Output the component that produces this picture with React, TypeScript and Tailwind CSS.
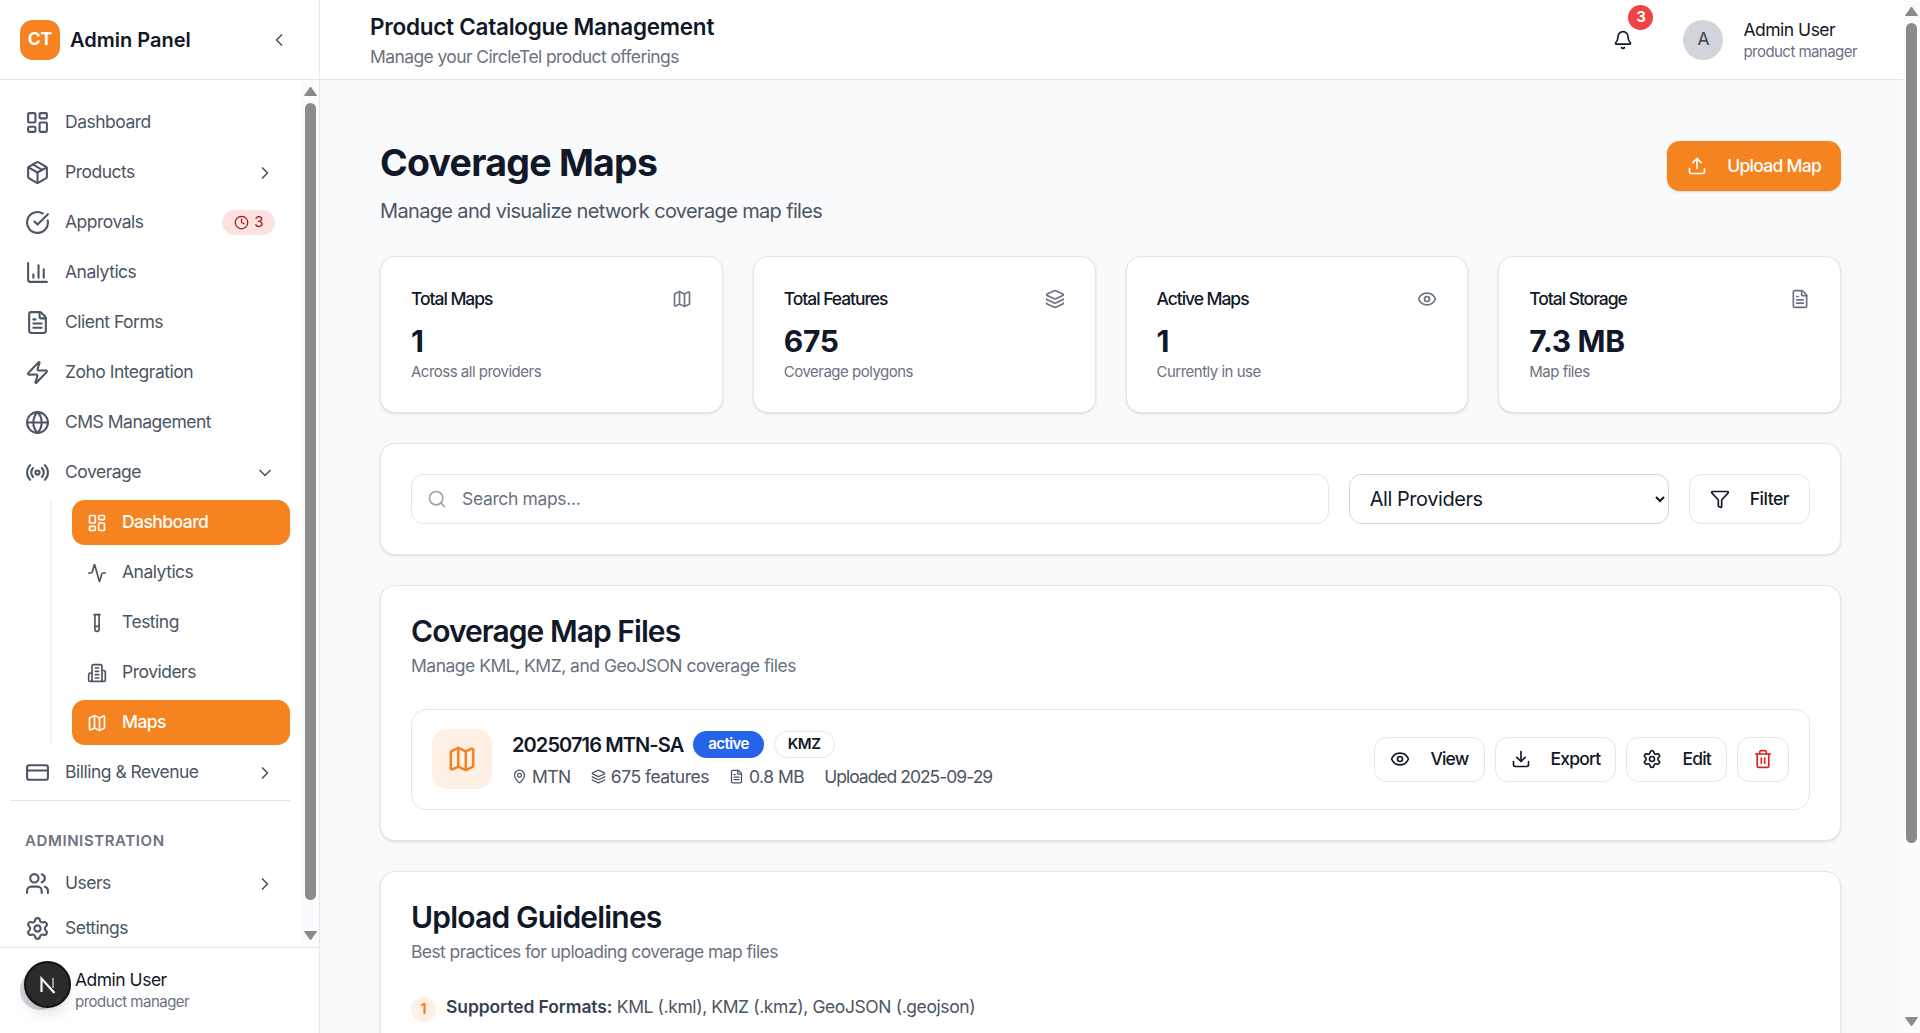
import {
  Activity,
  Bell,
  ChartColumn,
  ChevronDown,
  ChevronLeft,
  ChevronRight,
  CircleCheckBig,
  Clock,
  CreditCard,
  Download,
  Eye,
  FileText,
  Filter,
  Globe,
  Layers,
  LayoutDashboard,
  Map as MapIcon,
  MapPin,
  Package,
  Radio,
  Search,
  Settings,
  TestTube,
  Trash2,
  Upload,
  Users,
  Zap,
} from "lucide-react";
import type { ComponentType, ReactNode } from "react";

type Icon = ComponentType<{ className?: string; strokeWidth?: number }>;

function ProvidersIcon({ className }: { className?: string }) {
  return (
    <svg
      viewBox="0 0 24 24"
      fill="none"
      stroke="currentColor"
      strokeWidth="2"
      strokeLinecap="round"
      strokeLinejoin="round"
      className={className}
    >
      <path d="M6 22V4a2 2 0 0 1 2-2h8a2 2 0 0 1 2 2v18Z" />
      <path d="M6 12H4a2 2 0 0 0-2 2v6a2 2 0 0 0 2 2h2" />
      <path d="M18 9h2a2 2 0 0 1 2 2v9a2 2 0 0 1-2 2h-2" />
      <path d="M10 6h4" />
      <path d="M10 10h4" />
      <path d="M10 14h4" />
      <path d="M10 18h4" />
    </svg>
  );
}

function NavItem({
  icon: IconCmp,
  label,
  chevron,
  children,
}: {
  icon: Icon;
  label: string;
  chevron?: "right" | "down";
  children?: ReactNode;
}) {
  return (
    <div className="flex h-[45px] mb-[5px] items-center pl-[15px] pr-[15px] text-[17.5px] tracking-[-0.5px] text-[#4b5563]">
      <IconCmp className="w-[25px] h-[25px] shrink-0 text-[#4b5563]" strokeWidth={2} />
      <span className="ml-[15px] flex-1 whitespace-nowrap">{label}</span>
      {chevron === "right" && <ChevronRight className="w-[20px] h-[20px] text-[#4b5563]" />}
      {chevron === "down" && <ChevronDown className="w-[20px] h-[20px] text-[#4b5563]" />}
      {children}
    </div>
  );
}

function SubItem({ icon: IconCmp, label, active }: { icon: Icon; label: string; active?: boolean }) {
  return (
    <div
      className={
        active
          ? "flex h-[45px] items-center rounded-[12.5px] bg-[#f58320] pl-[15px] text-[17.5px] font-medium tracking-[-0.55px] text-white"
          : "flex h-[45px] items-center rounded-[12.5px] pl-[15px] text-[17.5px] tracking-[-0.5px] text-[#4b5563]"
      }
    >
      <IconCmp className="w-[20px] h-[20px] shrink-0" />
      <span className="ml-[15px]">{label}</span>
    </div>
  );
}

function ScrollBar({ thumbTop, thumbHeight }: { thumbTop: string; thumbHeight: string }) {
  return (
    <div className="flex w-[17px] shrink-0 flex-col items-center bg-[#fbfcfd] py-[6px]">
      <svg width="13" height="10" viewBox="0 0 13 10" className="shrink-0">
        <path d="M6.5 1 L12.5 9.5 H0.5 Z" fill="#8b8b8b" stroke="#8b8b8b" strokeLinejoin="round" />
      </svg>
      <div className={`w-[11px] rounded-full bg-[#8b8b8b] ${thumbTop} ${thumbHeight}`} />
      <div className="flex-1" />
      <svg width="13" height="10" viewBox="0 0 13 10" className="shrink-0">
        <path d="M0.5 0.5 H12.5 L6.5 9 Z" fill="#8b8b8b" stroke="#8b8b8b" strokeLinejoin="round" />
      </svg>
    </div>
  );
}

function Sidebar() {
  return (
    <aside className="flex h-[1033px] w-[320px] shrink-0 flex-col border-r border-[#e5e7eb] bg-white">
      <div className="flex h-[80px] shrink-0 items-center border-b border-[#e5e7eb] pl-[20px] pr-[30px]">
        <div className="flex h-[40px] w-[40px] items-center justify-center rounded-[12.5px] bg-[#f58320] text-[17.5px] font-bold text-white">
          CT
        </div>
        <span className="ml-[10px] flex-1 text-[20px] font-semibold text-[#111827]">Admin Panel</span>
        <ChevronLeft className="w-[20px] h-[20px] text-[#4b5563]" />
      </div>

      <div className="flex min-h-0 flex-1">
        <nav className="min-w-0 flex-1 overflow-hidden pl-[10px] pr-[12px] pt-[20px]">
          <NavItem icon={LayoutDashboard} label="Dashboard" />
          <NavItem icon={Package} label="Products" chevron="right" />
          <NavItem icon={CircleCheckBig} label="Approvals">
            <span className="flex h-[25px] items-center gap-[5px] rounded-full bg-[#fee2e2] px-[12px] text-[15px] text-[#991b1b]">
              <Clock className="w-[15px] h-[15px]" />3
            </span>
          </NavItem>
          <NavItem icon={ChartColumn} label="Analytics" />
          <NavItem icon={FileText} label="Client Forms" />
          <NavItem icon={Zap} label="Zoho Integration" />
          <NavItem icon={Globe} label="CMS Management" />
          <NavItem icon={Radio} label="Coverage" chevron="down" />
          <div className="ml-[40px] flex flex-col gap-[5px] border-l-2 border-[#f3f4f6] pl-[20px]">
            <SubItem icon={LayoutDashboard} label="Dashboard" active />
            <SubItem icon={Activity} label="Analytics" />
            <SubItem icon={TestTube} label="Testing" />
            <SubItem icon={ProvidersIcon} label="Providers" />
            <SubItem icon={MapIcon} label="Maps" active />
          </div>
          <div className="mt-[5px]">
            <NavItem icon={CreditCard} label="Billing & Revenue" chevron="right" />
          </div>
          <div className="mt-[1px] border-t border-[#e5e7eb] pb-[30px]" />
          <div className="h-[20px] pl-[15px] text-[15px] font-semibold uppercase leading-[20px] tracking-[0.6px] text-[#6b7280]">
            Administration
          </div>
          <div className="mt-[10px]">
            <div className="-mb-[5px]">
              <NavItem icon={Users} label="Users" chevron="right" />
            </div>
            <NavItem icon={Settings} label="Settings" />
          </div>
        </nav>
        <ScrollBar thumbTop="mt-[7px]" thumbHeight="h-[797px]" />
      </div>

      <div className="flex h-[86px] shrink-0 items-center border-t border-[#e5e7eb] pb-[2px] pl-[20px]">
        <div className="h-[40px] w-[40px] shrink-0 rounded-full bg-[#d1d5db]" />
        <div className="ml-[15px]">
          <div className="text-[17.5px] leading-[25px] tracking-[-0.5px] text-[#111827]">Admin User</div>
          <div className="text-[15px] leading-[20px] tracking-[-0.5px] text-[#6b7280]">product manager</div>
        </div>
      </div>
    </aside>
  );
}

function StatCard({ title, value, note, icon: IconCmp }: { title: string; value: string; note: string; icon: Icon }) {
  return (
    <div className="h-[157px] rounded-[15px] border border-[#e5e7eb] bg-white px-[30px] pt-[29px] shadow-sm">
      <div className="flex items-center justify-between">
        <span className="text-[17.5px] font-medium leading-[25px] tracking-[-1.05px] text-[#111827]">{title}</span>
        <IconCmp className="mt-[1px] w-[20px] h-[20px] text-[#6b7280]" />
      </div>
      <div className="mt-[10px] text-[30px] font-bold leading-[40px] tracking-[-0.3px] text-[#111827]">{value}</div>
      <div className="mt-[1px] text-[15px] leading-[20px] tracking-[-0.5px] text-[#6b7280]">{note}</div>
    </div>
  );
}

function ActionButton({ icon: IconCmp, label }: { icon: Icon; label: string }) {
  return (
    <button
      type="button"
      className="flex h-[45px] items-center gap-[20px] rounded-[12.5px] border border-[#e5e7eb] bg-white px-[15px] text-[17.5px] font-medium tracking-[-0.8px] text-[#111827]"
    >
      <IconCmp className="w-[20px] h-[20px]" />
      {label}
    </button>
  );
}

function MetaItem({ icon: IconCmp, children }: { icon: Icon; children: ReactNode }) {
  return (
    <span className="flex items-center gap-[5px] tracking-[-0.5px]">
      <IconCmp className="w-[15px] h-[15px]" />
      {children}
    </span>
  );
}

function NextBadge() {
  return (
    <div className="absolute left-[24px] top-[961px] flex h-[47px] w-[47px] items-center justify-center rounded-full border-2 border-[#111111] bg-[#2b2b2b] shadow-lg">
      <svg width="20" height="20" viewBox="0 0 20 20" fill="none">
        <path d="M3.5 17V3.5L16.5 18" stroke="#f5f5f5" strokeWidth="2.2" />
        <path d="M15 3v10" stroke="#9a9a9a" strokeWidth="2" />
      </svg>
    </div>
  );
}

export default function App() {
  return (
    <div className="relative flex h-[1033px] w-full overflow-hidden bg-[#f9fafb] [font-family:Inter,sans-serif]">
      <Sidebar />

      <div className="flex min-w-0 flex-1 flex-col">
        <header className="flex h-[80px] shrink-0 items-center border-b border-[#e5e7eb] bg-white pl-[50px] pr-[46px]">
          <div className="flex-1 pt-[2px]">
            <h1 className="text-[22.5px] font-semibold leading-[30px] tracking-[-0.25px] text-[#111827]">
              Product Catalogue Management
            </h1>
            <p className="mt-[2px] text-[17.5px] leading-[25px] tracking-[-0.6px] text-[#6b7280]">
              Manage your CircleTel product offerings
            </p>
          </div>
          <div className="relative mr-[50px]">
            <Bell className="w-[20px] h-[20px] text-[#111827]" />
            <span className="absolute -right-[20px] -top-[25px] flex h-[25px] w-[25px] items-center justify-center rounded-full bg-[#ef4444] text-[15px] font-bold text-white">
              3
            </span>
          </div>
          <div className="flex h-[40px] w-[40px] items-center justify-center rounded-full bg-[#d1d5db] text-[17.5px] text-[#374151]">
            A
          </div>
          <div className="ml-[20px]">
            <div className="text-[17.5px] leading-[25px] tracking-[-0.5px] text-[#111827]">Admin User</div>
            <div className="text-[15px] leading-[20px] tracking-[-0.55px] text-[#6b7280]">product manager</div>
          </div>
        </header>

        <main className="min-h-0 flex-1 overflow-hidden pl-[60px] pr-[62px] pt-[60px]">
          <div className="flex items-start justify-between">
            <div>
              <h2 className="text-[37.5px] font-bold leading-[45px] tracking-[-0.75px] text-[#111827]">Coverage Maps</h2>
              <p className="mt-[11px] text-[20px] leading-[30px] tracking-[-0.65px] text-[#4b5563]">
                Manage and visualize network coverage map files
              </p>
            </div>
            <button
              type="button"
              className="mt-[1px] flex h-[50px] items-center gap-[20px] rounded-[12.5px] bg-[#f58320] px-[20px] text-[17.5px] font-medium tracking-[-0.73px] text-white shadow-sm"
            >
              <Upload className="w-[20px] h-[20px]" />
              Upload Map
            </button>
          </div>

          <div className="mt-[30px] grid grid-cols-4 gap-[30px]">
            <StatCard title="Total Maps" value="1" note="Across all providers" icon={MapIcon} />
            <StatCard title="Total Features" value="675" note="Coverage polygons" icon={Layers} />
            <StatCard title="Active Maps" value="1" note="Currently in use" icon={Eye} />
            <StatCard title="Total Storage" value="7.3 MB" note="Map files" icon={FileText} />
          </div>

          <div className="mt-[30px] flex h-[112px] items-center gap-[20px] rounded-[15px] border border-[#e5e7eb] bg-white px-[30px] shadow-sm">
            <div className="flex h-[50px] flex-1 items-center rounded-[12.5px] border border-[#e5e7eb] pl-[15px]">
              <Search className="w-[20px] h-[20px] shrink-0 text-[#9ca3af]" />
              <input
                placeholder="Search maps..."
                className="ml-[15px] flex-1 bg-transparent text-[17.5px] tracking-[-0.35px] outline-none placeholder:text-[#6b7280]"
              />
            </div>
            <select className="h-[50px] w-[320px] rounded-[12.5px] border border-[#d1d5db] bg-white pl-[16px] pr-[5px] text-[20px] tracking-[-0.46px] text-[#111827]">
              <option>All Providers</option>
            </select>
            <button
              type="button"
              className="flex h-[50px] items-center gap-[20px] rounded-[12.5px] border border-[#e5e7eb] bg-white px-[20px] text-[17.5px] font-medium tracking-[-0.5px] text-[#111827]"
            >
              <Filter className="w-[20px] h-[20px]" />
              Filter
            </button>
          </div>

          <section className="mt-[30px] rounded-[15px] border border-[#e5e7eb] bg-white p-[30px] shadow-sm">
            <h3 className="text-[30px] font-semibold leading-[30px] tracking-[-0.95px] text-[#111827]">
              Coverage Map Files
            </h3>
            <p className="mt-[6.5px] text-[17.5px] leading-[25px] tracking-[-0.5px] text-[#6b7280]">
              Manage KML, KMZ, and GeoJSON coverage files
            </p>
            <div className="mt-[31px] flex h-[101px] items-center rounded-[15px] border border-[#e5e7eb] px-[20px]">
              <div className="flex h-[60px] w-[60px] shrink-0 items-center justify-center rounded-[15px] bg-[#fef0e5]">
                <MapIcon className="w-[30px] h-[30px] text-[#f58320]" />
              </div>
              <div className="ml-[20px] flex-1">
                <div className="flex items-center">
                  <span className="text-[20px] font-semibold leading-[30px] tracking-[-0.9px] text-[#111827]">
                    20250716 MTN-SA
                  </span>
                  <span className="ml-[10px] flex h-[27px] items-center rounded-full bg-[#2563eb] px-[15px] text-[15px] font-semibold tracking-[-0.6px] text-white">
                    active
                  </span>
                  <span className="ml-[10px] flex h-[27px] items-center rounded-full border border-[#e5e7eb] px-[13px] text-[15px] font-semibold tracking-[-0.4px] text-[#111827]">
                    KMZ
                  </span>
                </div>
                <div className="mt-[4px] flex items-center gap-[20px] text-[17.5px] leading-[25px] text-[#4b5563]">
                  <MetaItem icon={MapPin}>MTN</MetaItem>
                  <MetaItem icon={Layers}>675 features</MetaItem>
                  <MetaItem icon={FileText}>0.8 MB</MetaItem>
                  <span className="tracking-[-1px]">Uploaded 2025-09-29</span>
                </div>
              </div>
              <div className="flex items-center gap-[10px]">
                <ActionButton icon={Eye} label="View" />
                <ActionButton icon={Download} label="Export" />
                <ActionButton icon={Settings} label="Edit" />
                <button
                  type="button"
                  className="flex h-[45px] w-[52px] items-center justify-center rounded-[12.5px] border border-[#e5e7eb] bg-white text-[#dc2626]"
                >
                  <Trash2 className="w-[20px] h-[20px]" />
                </button>
              </div>
            </div>
          </section>

          <section className="mt-[30px] rounded-[15px] border border-[#e5e7eb] bg-white p-[30px] shadow-sm">
            <h3 className="text-[30px] font-semibold leading-[30px] tracking-[-0.8px] text-[#111827]">Upload Guidelines</h3>
            <p className="mt-[7px] text-[17.5px] leading-[25px] tracking-[-0.6px] text-[#6b7280]">
              Best practices for uploading coverage map files
            </p>
            <div className="mt-[30px] flex items-start gap-[10px]">
              <span className="mt-[3px] flex h-[25px] w-[25px] shrink-0 items-center justify-center rounded-full bg-[#fef0e5] text-[15px] font-bold text-[#f58320]">
                1
              </span>
              <p className="text-[17.5px] leading-[25px] tracking-[-0.4px] text-[#4b5563]">
                <strong className="font-semibold tracking-[-0.1px] text-[#374151]">Supported Formats:</strong> KML (.kml),
                KMZ (.kmz), GeoJSON (.geojson)
              </p>
            </div>
          </section>
        </main>
      </div>

      <ScrollBar thumbTop="mt-[7px]" thumbHeight="h-[820px]" />
      <NextBadge />
    </div>
  );
}
